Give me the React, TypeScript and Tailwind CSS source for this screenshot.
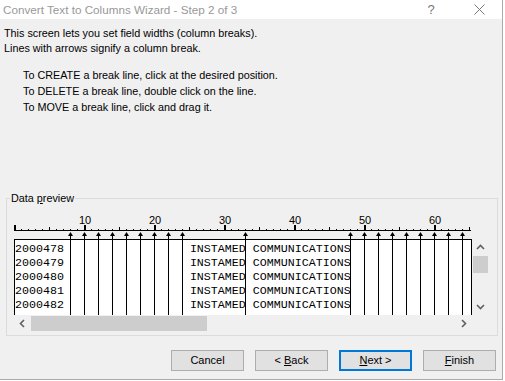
import React from 'react'

const BREAKS = [8, 10, 12, 14, 16, 18, 20, 22, 24, 33, 48, 50, 52, 54, 56, 58, 60, 62, 64]
const ROWS = ['2000478', '2000479', '2000480', '2000481', '2000482']

function Ruler() {
  const ticks = Array.from({ length: 66 }, (_, c) => c)
  return (
    <svg width={458} height={33} className="block">
      <rect x={0} y={24} width={457} height={1} fill="#000" />
      {ticks.map((c) =>
        c % 10 === 0 ? (
          <rect key={c} x={7 * c} y={19} width={2} height={5} fill="#000" />
        ) : c % 5 === 0 ? (
          <rect key={c} x={7 * c} y={21} width={1} height={3} fill="#000" />
        ) : (
          <rect key={c} x={7 * c} y={23} width={1} height={1} fill="#000" />
        )
      )}
      {[10, 20, 30, 40, 50, 60].map((n) => (
        <text
          key={n}
          x={7 * n + 1}
          y={18}
          textAnchor="middle"
          fontSize={11}
          fill="#000"
          className="font-['Liberation_Sans']"
        >
          {n}
        </text>
      ))}
      {BREAKS.map((c) => (
        <g key={c} fill="#000">
          <polygon points={`${7 * c - 2},30 ${7 * c + 3},30 ${7 * c + 0.5},26`} />
          <rect x={7 * c} y={29} width={1} height={4} />
        </g>
      ))}
    </svg>
  )
}

function Chevron({ dir }: { dir: 'up' | 'down' | 'left' | 'right' }) {
  const pts = {
    up: '1,6 4.5,2.5 8,6',
    down: '1,3 4.5,6.5 8,3',
    left: '6,1 2.5,4.5 6,8',
    right: '3,1 6.5,4.5 3,8',
  }[dir]
  return (
    <svg width={9} height={9}>
      <polyline points={pts} fill="none" stroke="#606060" strokeWidth={1.6} />
    </svg>
  )
}

function DataPreview() {
  return (
    <div className="ml-[7px] flex flex-col">
      <Ruler />
      <div className="flex">
        <div className="relative w-[458px] h-[76px] bg-white overflow-hidden">
          <div className="pl-[1px] pt-[3px] font-['Liberation_Mono'] text-[11.67px] leading-[14px] whitespace-pre text-black">
            {ROWS.map((r) => (
              <div key={r}>{r.padEnd(25, ' ')}INSTAMED COMMUNICATIONS</div>
            ))}
          </div>
          <svg className="absolute inset-0" width={458} height={76}>
            <rect x={0} y={0} width={458} height={1} fill="#000" />
            <rect x={0} y={0} width={1} height={76} fill="#000" />
            <rect x={457} y={0} width={1} height={76} fill="#000" />
            {BREAKS.map((c) => (
              <rect key={c} x={7 * c} y={0} width={1} height={76} fill="#000" />
            ))}
          </svg>
        </div>
        {/* vertical scrollbar */}
        <div className="w-[17px] h-[76px] bg-[#f0f0f0] flex flex-col">
          <div className="h-[17px] flex items-center justify-center">
            <Chevron dir="up" />
          </div>
          <div className="h-[17px] mx-[1px] bg-[#cdcdcd]" />
          <div className="flex-1" />
          <div className="h-[17px] flex items-center justify-center">
            <Chevron dir="down" />
          </div>
        </div>
      </div>
      {/* horizontal scrollbar */}
      <div className="w-[458px] h-[17px] bg-[#f0f0f0] flex">
        <div className="w-[17px] flex items-center justify-center">
          <Chevron dir="left" />
        </div>
        <div className="w-[176px] my-[1px] bg-[#cdcdcd]" />
        <div className="flex-1" />
        <div className="w-[17px] flex items-center justify-center">
          <Chevron dir="right" />
        </div>
      </div>
    </div>
  )
}

function Button({ children, primary }: { children: React.ReactNode; primary?: boolean }) {
  return (
    <button
      className={
        primary
          ? 'w-[73px] h-[21px] bg-[#e1e1e1] border-2 border-[#0078d7] flex items-center justify-center'
          : 'w-[73px] h-[21px] bg-[#e1e1e1] border border-[#adadad] flex items-center justify-center'
      }
    >
      <span className="whitespace-pre">{children}</span>
    </button>
  )
}

export default function App() {
  return (
    <div className="w-[505px] h-[381px] bg-white">
      <div className="w-[503px] h-[380px] bg-[#f0f0f0] border-r border-b border-[#aaaaaa] font-['Liberation_Sans'] text-[10.8px] text-black flex flex-col">
        {/* Title bar */}
        <div className="h-[19px] bg-white flex items-center pl-[3px] text-[#999999] text-[11.7px]">
          <span className="flex-1">Convert Text to Columns Wizard - Step 2 of 3</span>
          <span className="w-[10px] text-center mr-[38px] text-[13px] text-[#777]">?</span>
          <svg width={11} height={11} className="mr-[17px]">
            <path d="M0.5 0.5 L10.5 10.5 M10.5 0.5 L0.5 10.5" stroke="#777" strokeWidth={1} />
          </svg>
        </div>

        <div className="mt-[7px] pl-[4px] leading-[15px]">
          <div>This screen lets you set field widths (column breaks).</div>
          <div>Lines with arrows signify a column break.</div>
        </div>

        <div className="mt-[11px] pl-[23px] leading-[16px]">
          <div>To CREATE a break line, click at the desired position.</div>
          <div>To DELETE a break line, double click on the line.</div>
          <div>To MOVE a break line, click and drag it.</div>
        </div>

        <fieldset className="mt-[75px] mx-[6px] w-[492px] border border-[#dcdcdc] pb-[3px]">
          <legend className="ml-[3px] px-[1px] leading-[16px]">
            Data <u className="underline-offset-1">p</u>review
          </legend>
          <DataPreview />
        </fieldset>

        <div className="mt-[14px] flex justify-end gap-[11px] pr-[6px] text-[11px]">
          <Button>Cancel</Button>
          <Button>
            {'< '}
            <u className="underline-offset-1">B</u>ack
          </Button>
          <Button primary>
            <u className="underline-offset-1">N</u>
            {'ext >'}
          </Button>
          <Button>
            <u className="underline-offset-1">F</u>inish
          </Button>
        </div>
      </div>
    </div>
  )
}
